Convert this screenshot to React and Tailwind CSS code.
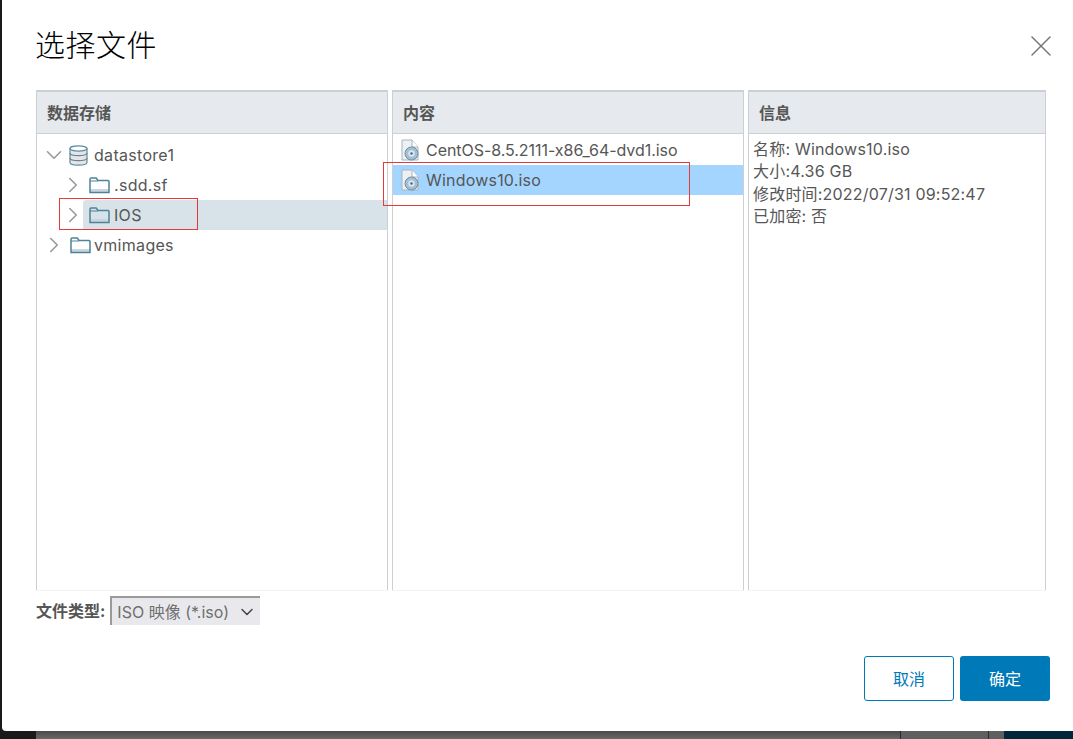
import { ChevronDown, ChevronRight, X } from 'lucide-react'

const font = 'font-["Inter","Noto_Sans_CJK_SC",sans-serif]'

function FolderIcon() {
  return (
    <svg className="shrink-0" width="21" height="17" viewBox="0 0 21 17">
      <path d="M1 12h19v3.500H1z" fill="#c9d6df" />
      <path
        d="M1 15.500V2.200C1 1.500 1.500 1 2.200 1h5l1.800 2.500h10C19.600 3.500 20 4 20 4.600v10.900z"
        fill="none"
        stroke="#4f8299"
        strokeWidth="1.500"
      />
      <path d="M1 4h8" stroke="#4f8299" strokeWidth="1" />
    </svg>
  )
}

function DatastoreIcon() {
  return (
    <svg className="-ml-px mr-[3px] shrink-0" width="19" height="21" viewBox="0 0 19 21">
      <path d="M1 3.500v14c0 1.500 3.500 2.700 8.500 2.700s8.500-1.200 8.500-2.700v-14z" fill="#dfe7ec" stroke="#5a8ba1" strokeWidth="1.200" />
      <ellipse cx="9.500" cy="3.500" rx="8.500" ry="2.700" fill="#fff" stroke="#5a8ba1" strokeWidth="1.200" />
      <path d="M1 8c0 1.500 3.500 2.700 8.500 2.700S18 9.500 18 8M1 13c0 1.500 3.500 2.700 8.500 2.700S18 14.500 18 13" fill="none" stroke="#7d7d7d" strokeWidth="1.200" />
    </svg>
  )
}

function IsoIcon() {
  return (
    <svg className="shrink-0" width="19" height="22" viewBox="0 0 19 22">
      <path d="M1 1h10l6 7v13H1z" fill="#eef1f3" stroke="#a9b4bb" strokeWidth="1" />
      <path d="M11 1v7h6" fill="#fff" stroke="#a9b4bb" strokeWidth="1" />
      <circle cx="10.500" cy="14.500" r="6.500" fill="#a3bfd2" stroke="#6b90a8" strokeWidth="1" />
      <circle cx="10.500" cy="14.500" r="3.200" fill="#dbe7ef" />
      <circle cx="10.500" cy="14.500" r="1.200" fill="#47677c" />
    </svg>
  )
}

function PanelHeader({ children }) {
  return (
    <div className="flex h-[42px] shrink-0 items-center border-b border-[#ccd0d4] bg-[#e6e9ed] pl-[10px] text-[16px] font-bold text-[#565656]">
      {children}
    </div>
  )
}

function Panel({ width, children }) {
  return (
    <div
      className={`flex h-[500px] ${width} shrink-0 flex-col border-x border-t-2 border-[#ccd0d4] border-b-0 bg-white shadow-[0_1px_0_#f3f3f3]`}
    >
      {children}
    </div>
  )
}

function TreeRow({ nested, open, selected, icon, label }) {
  const Chevron = open ? ChevronDown : ChevronRight
  return (
    <div className={`flex h-[30px] items-center ${nested ? 'pl-[26px]' : 'pl-[7px]'}`}>
      <div className="flex w-[20px] shrink-0 justify-center">
        <Chevron className="shrink-0 text-[#9a9a9a]" size={26} strokeWidth={1.500} />
      </div>
      <div
        className={`flex h-full flex-1 items-center rounded-l-[3px] pl-[6px] ${nested ? 'gap-[3px]' : 'gap-[2px]'} ${selected ? 'bg-[#d8e3e9]' : ''}`}
      >
        {icon}
        <span className="ml-px tracking-[0.3px]">{label}</span>
      </div>
    </div>
  )
}

function FileRow({ selected, label, tracking }) {
  return (
    <div className={`flex h-[30px] items-center gap-[6px] pl-[8px] ${selected ? 'bg-[#a3d5ff]' : ''}`}>
      <IsoIcon />
      <span className={tracking}>{label}</span>
    </div>
  )
}

export default function App() {
  return (
    <div className={`flex h-[739px] w-[1073px] flex-col overflow-hidden bg-[#1a1a1a] text-[16px] text-[#565656] ${font}`}>
      <div className="relative ml-[2px] flex h-[731px] shrink-0 flex-col rounded-bl-[4px] bg-white pl-[34px]">
        <div className="flex h-[90px] shrink-0 items-start justify-between pr-[14px]">
          <h1 className="mt-[25px] -ml-px text-[30px] leading-[40px] font-light tracking-[0.5px] text-black">选择文件</h1>
          <X className="mt-[28px] text-[#747474]" size={36} strokeWidth={1} />
        </div>

        <div className="flex gap-[4px]">
          <Panel width="w-[352px]">
            <PanelHeader>数据存储</PanelHeader>
            <div className="pt-[6px]">
              <TreeRow open icon={<DatastoreIcon />} label="datastore1" />
              <TreeRow nested icon={<FolderIcon />} label=".sdd.sf" />
              <TreeRow nested selected icon={<FolderIcon />} label="IOS" />
              <TreeRow icon={<FolderIcon />} label="vmimages" />
            </div>
          </Panel>
          <Panel width="w-[352px]">
            <PanelHeader>内容</PanelHeader>
            <div className="pt-px">
              <FileRow label="CentOS-8.5.2111-x86_64-dvd1.iso" tracking="tracking-[-0.05px]" />
              <FileRow selected label="Windows10.iso" tracking="tracking-[0.2px]" />
            </div>
          </Panel>
          <Panel width="w-[298px]">
            <PanelHeader>信息</PanelHeader>
            <div className="pt-[4px] pl-[4px] leading-[22.300px] tracking-[0.2px]">
              <p>名称: Windows10.iso</p>
              <p>大小:4.36 GB</p>
              <p>修改时间:2022/07/31 09:52:47</p>
              <p>已加密: 否</p>
            </div>
          </Panel>
        </div>

        <div className="mt-[6px] flex items-center gap-[5px]">
          <span className="font-bold">文件类型:</span>
          <div className="flex h-[29px] w-[150px] items-center justify-between border-t-2 border-l-2 border-[#9a9a9a] bg-[#e9e9ed] pr-[3px] pl-[5px] text-[#6f6f6f]">
            <span>ISO 映像 (*.iso)</span>
            <ChevronDown className="text-[#444]" size={20} strokeWidth={1.800} />
          </div>
        </div>

        <div className="mt-[31px] mr-[23px] flex justify-end gap-[6px]">
          <button className="h-[45px] w-[90px] rounded-[3px] border border-[#0079b8] bg-white text-[#0079b8]" type="button">
            取消
          </button>
          <button className="h-[45px] w-[90px] rounded-[3px] bg-[#0079b8] text-white" type="button">
            确定
          </button>
        </div>

        <div className="pointer-events-none absolute top-[198px] left-[57px] h-[32px] w-[139px] border border-[#e8393a]" />
        <div className="pointer-events-none absolute top-[162px] left-[381px] h-[44px] w-[307px] border border-[#e8393a]" />
      </div>

      <div className="flex flex-1">
        <div className="w-[36px] bg-[#1a1a1a]" />
        <div className="w-[864px] bg-gradient-to-b from-[#4a4a4a] to-[#6a6a6a]" />
        <div className="w-[89px] border-x border-[#1c2f3c] bg-[#5f5f5f]" />
        <div className="w-[15px] bg-[#5f5f5f]" />
        <div className="flex-1 bg-[#00263b]" />
      </div>
    </div>
  )
}
